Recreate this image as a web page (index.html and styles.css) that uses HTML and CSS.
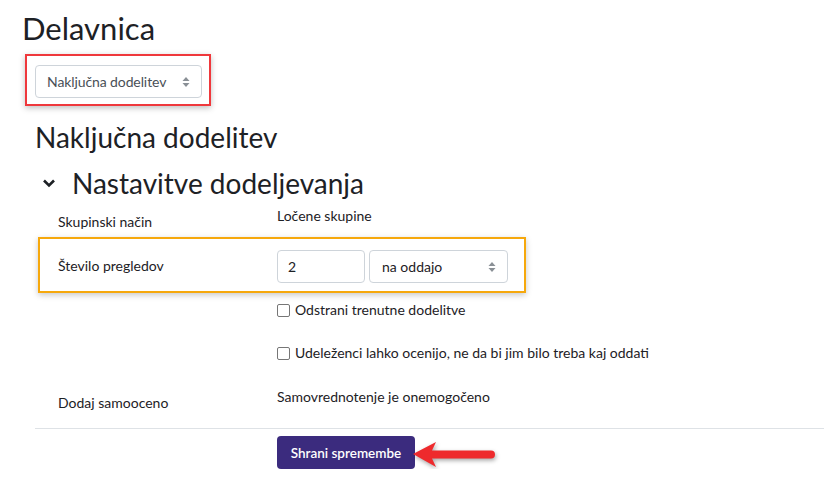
FILE: index.html
```html
<!DOCTYPE html>
<html lang="sl">
<head>
    <meta charset="UTF-8">
    <meta name="viewport" content="width=device-width, initial-scale=1.0">
    <title>Delavnica</title>
    <link rel="stylesheet" href="styles.css">
</head>
<body>
    <div class="page">
        <h1 class="title">Delavnica</h1>

        <div class="mark-red">
            <div class="fake-select mode-select">
                <span>Naključna dodelitev</span>
                <svg class="updown" width="8" height="12" viewBox="0 0 8 12"><path d="M4 1 L7.5 5 H0.5 Z M4 11 L7.5 7 H0.5 Z" fill="#8a9096"/></svg>
            </div>
        </div>

        <div class="section">
            <h2 class="sub">Naključna dodelitev</h2>
            <h3 class="legend">
                <svg class="chevron" width="14" height="10" viewBox="0 0 14 10"><path d="M2 2.5 L7 7.5 L12 2.5" fill="none" stroke="#1d2125" stroke-width="2.6"/></svg>
                Nastavitve dodeljevanja
            </h3>

            <div class="row row-static">
                <div class="label">Skupinski način</div>
                <div class="value">Ločene skupine</div>
            </div>

            <div class="row row-marked">
                <div class="label">Število pregledov</div>
                <div class="controls">
                    <div class="text-input">2</div>
                    <div class="fake-select count-select">
                        <span>na oddajo</span>
                        <svg class="updown" width="8" height="12" viewBox="0 0 8 12"><path d="M4 1 L7.5 5 H0.5 Z M4 11 L7.5 7 H0.5 Z" fill="#8a9096"/></svg>
                    </div>
                </div>
            </div>

            <div class="row row-check first-check">
                <div></div>
                <label class="check"><span class="box"></span>Odstrani trenutne dodelitve</label>
            </div>

            <div class="row row-check second-check">
                <div></div>
                <label class="check"><span class="box"></span>Udeleženci lahko ocenijo, ne da bi jim bilo treba kaj oddati</label>
            </div>

            <div class="row row-static last-static">
                <div class="label">Dodaj samooceno</div>
                <div class="value">Samovrednotenje je onemogočeno</div>
            </div>

            <div class="actions">
                <div class="save-wrap">
                    <button class="save">Shrani spremembe</button>
                    <svg class="pointer" width="90" height="34" viewBox="0 0 90 34"><path d="M1 13 L24 1 L20 9.5 L79 9.5 A4 4 0 0 1 79 17.5 L20 17.5 L24 26 Z" fill="#ee2a2d"/></svg>
                </div>
            </div>
        </div>
    </div>
</body>
</html>
```

FILE: styles.css
```css
body {
    margin: 0;
    font-family: Lato, "Open Sans", sans-serif;
    font-size: 15px;
    color: #1d2125;
    background-color: #fff;
}
.page {
    padding: 9px 0 0 22px;
}
.title {
    font-size: 31px;
    font-weight: 400;
    line-height: 38px;
    margin: 0;
}
.mark-red {
    display: inline-block;
    margin: 7px 0 0 3px;
    padding: 9px 7px 6px 8px;
    border: 2px solid #ef383c;
    box-shadow: 0 2px 6px rgba(0, 0, 0, 0.25);
}
.fake-select {
    display: flex;
    align-items: center;
    justify-content: space-between;
    box-sizing: border-box;
    height: 33px;
    border: 1px solid #ced4da;
    border-radius: 4px;
    color: #495057;
    font-size: 14px;
    padding: 0 11px 0 12px;
}
.mode-select {
    width: 167px;
    padding-left: 11px;
    letter-spacing: -0.1px;
}
.count-select {
    width: 139px;
    padding-left: 12px;
    color: #1d2125;
}
.section {
    margin-left: 13px;
}
.sub {
    font-size: 28px;
    font-weight: 400;
    line-height: 32px;
    margin: 15px 0 0;
}
.legend {
    display: flex;
    align-items: center;
    font-size: 28px;
    font-weight: 400;
    line-height: 34px;
    margin: 13px 0 0;
}
.chevron {
    margin: 0 16px 0 7px;
}
.row {
    display: grid;
    grid-template-columns: 242px 1fr;
}
.label {
    padding-left: 23px;
    font-size: 14px;
    line-height: 22px;
}
.value {
    font-size: 14px;
    line-height: 22px;
}
.row-static {
    height: 37px;
}
.row-static .label {
    padding-top: 11px;
}
.row-static .value {
    padding-top: 5px;
}
.last-static {
    height: 47px;
}
.row-marked {
    width: 488px;
    box-sizing: border-box;
    margin-left: 3px;
    border: 2px solid #f6a80c;
    box-shadow: 0 2px 6px rgba(0, 0, 0, 0.22);
    grid-template-columns: 237px 1fr;
    padding: 11px 0 8px;
}
.row-marked .label {
    padding-left: 18px;
    padding-top: 5px;
}
.controls {
    display: flex;
    gap: 4px;
}
.text-input {
    box-sizing: border-box;
    width: 88px;
    height: 33px;
    border: 1px solid #ced4da;
    border-radius: 4px;
    padding-left: 10px;
    font-size: 14px;
    line-height: 31px;
}
.row-check {
    font-size: 14px;
    line-height: 22px;
    align-items: start;
}
.first-check {
    padding-top: 6px;
    height: 43px;
}
.second-check {
    height: 39px;
}
.check {
    display: flex;
    align-items: center;
}
.box {
    box-sizing: border-box;
    width: 13px;
    height: 13px;
    border: 1px solid #767676;
    border-radius: 2px;
    margin-right: 5px;
}
.actions {
    border-top: 1px solid #dee2e6;
    padding: 7px 0 0 242px;
}
.save-wrap {
    position: relative;
    display: inline-block;
}
.save {
    width: 138px;
    height: 33px;
    border: none;
    border-radius: 4px;
    background-color: #3b2b7e;
    color: #fff;
    font-family: Lato, "Open Sans", sans-serif;
    font-size: 13.5px;
    font-weight: 600;
    cursor: pointer;
}
.pointer {
    position: absolute;
    left: 135px;
    top: 5px;
    filter: drop-shadow(1px 2px 2px rgba(0, 0, 0, 0.35));
}
```
